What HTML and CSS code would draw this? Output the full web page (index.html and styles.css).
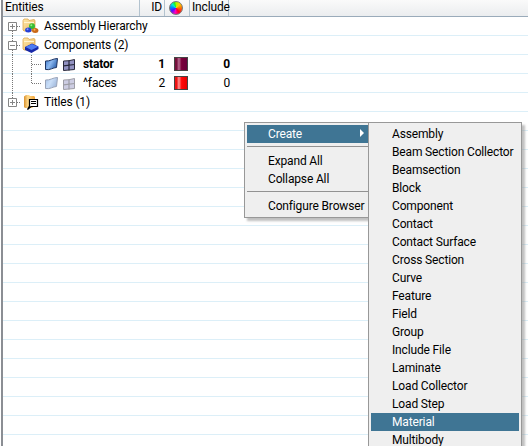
FILE: index.html
```html
<!DOCTYPE html>
<html lang="en">
<head>
<meta charset="utf-8">
<title>Entities</title>
<link rel="stylesheet" href="styles.css">
</head>
<body>
<svg class="defs" width="0" height="0">
  <defs>
    <linearGradient id="fold" x1="0" y1="0" x2="1" y2="1"><stop offset="0" stop-color="#ffe9ad"/><stop offset="1" stop-color="#e8b65c"/></linearGradient>
    <linearGradient id="orange" x1="0" x2="1"><stop offset="0" stop-color="#d9912e"/><stop offset=".35" stop-color="#ffd98a"/><stop offset="1" stop-color="#f0a63c"/></linearGradient>
    <linearGradient id="sheet" x1="0" x2="1" y2=".5"><stop offset="0" stop-color="#3c78cc"/><stop offset=".5" stop-color="#8db9f0"/><stop offset="1" stop-color="#3468b4"/></linearGradient>
    <symbol id="folder" viewBox="0 0 17 17"><path d="M1 2.5 2 1h4l1 1.5 5-1 1 .8V12l-3 1H2L1 12z" fill="url(#fold)" stroke="#dda850" stroke-width=".8"/><path d="M2 4.5h10" stroke="#fff3cf"/></symbol>
    <symbol id="surface" viewBox="0 0 15 15"><path d="M1.5 4C6 4.500 9 1.500 13.500 1.500L12.500 10.500C9 10.500 6 13.500 1.500 12.500z" fill="url(#sheet)" stroke="#1e3462"/></symbol>
    <symbol id="mesh" viewBox="0 0 14 14"><path d="M1.500 3Q7 3.200 12.500 1.500V11.500Q7 12 1.500 12.500z" fill="#9292c2" stroke="#29293c"/><path d="M7 2.500v10M1.500 7.800 12.500 6.500" stroke="#29293c" fill="none" stroke-width="1.200"/></symbol>
  </defs>
</svg>
<div class="tree">
  <div class="head"><div class="c-name">Entities</div><div class="c-id">ID</div><div class="c-color"><i class="wheel"></i></div><div class="c-inc">Include</div><div class="c-rest"></div></div>
  <div class="row">
    <svg class="lines" width="18" height="19"><path d="M9.500 14v5M14 9.500h4" class="dot"/><path d="M5.500 5.500h8v8h-8zM7 9.500h5M9.500 7v5" class="box"/></svg>
    <svg class="ico" width="17" height="17"><use href="#folder"/><circle cx="10" cy="8.300" r="3" fill="#35bd35"/><circle cx="9.300" cy="7.300" r="1" fill="#96ee80"/><ellipse cx="6.300" cy="12" rx="3.200" ry="2.500" fill="#243fd8"/><ellipse cx="13.200" cy="12.500" rx="3.200" ry="2.500" fill="#c96818"/><circle cx="12.500" cy="11.700" r="1" fill="#f6b553"/><circle cx="5.500" cy="11.300" r="1" fill="#7b9cff"/></svg>
    <span class="label"><span class="w94">Assembly Hierarchy</span></span>
  </div>
  <div class="row">
    <svg class="lines" width="18" height="19"><path d="M9.500 0v5M9.500 14v5M14 9.500h4" class="dot"/><path d="M5.500 5.500h8v8h-8zM7 9.500h5" class="box"/></svg>
    <svg class="ico" width="17" height="17"><use href="#folder"/><path d="M3 10 10 6.500 16.500 9.500V12L9.500 16 3 13z" fill="#1728a8"/><path d="M3.500 10 10 7 16 9.700 9.500 13z" fill="#4e7cf2"/></svg>
    <span class="label">Components (2)</span>
  </div>
  <div class="row bold">
    <svg class="lines wide" width="41" height="19"><path d="M9.500 0v19M28.500 0v19M29 9.500h9" class="dot"/></svg>
    <svg class="surf" width="15" height="15"><use href="#surface"/></svg><svg class="mesh" width="14" height="14"><use href="#mesh"/></svg>
    <span class="label child">stator</span><span class="id">1</span><i class="swatch maroon"></i><span class="inc">0</span>
  </div>
  <div class="row faded">
    <svg class="lines wide" width="41" height="19"><path d="M9.500 0v19M28.500 0v10M29 9.500h9" class="dot"/></svg>
    <svg class="surf" width="15" height="15"><use href="#surface"/></svg><svg class="mesh" width="14" height="14"><use href="#mesh"/></svg>
    <span class="label child">^faces</span><span class="id">2</span><i class="swatch red"></i><span class="inc">0</span>
  </div>
  <div class="row">
    <svg class="lines" width="18" height="19"><path d="M9.500 0v5M14 9.500h4" class="dot"/><path d="M5.500 5.500h8v8h-8zM7 9.500h5M9.500 7v5" class="box"/></svg>
    <svg class="ico" width="17" height="17"><path d="M2 2.500 4 1h3l1 1h4l1 1v8l-3 3H3L2 13z" fill="url(#orange)"/><path d="M7.500 5.500h8v7H9L5.500 15.500 7.500 12z" fill="#fff" stroke="#000" stroke-width="1.200"/><path d="M9 7.500h5M9 9.500h5" stroke="#000"/></svg>
    <span class="label">Titles (1)</span>
  </div>
  <div class="blank"></div>
</div>
<div class="menu main">
  <div class="item on">Create<svg class="arrow" width="4" height="8"><path d="M0 0 4 4 0 8z" fill="#fff"/></svg></div>
  <hr><div class="item">Expand All</div><div class="item">Collapse All</div>
  <hr><div class="item cfg">Configure Browser</div>
</div>
<div class="menu sub">
  <div class="item">Assembly</div><div class="item">Beam Section Collector</div><div class="item">Beamsection</div><div class="item">Block</div><div class="item">Component</div><div class="item">Contact</div><div class="item">Contact Surface</div><div class="item">Cross Section</div><div class="item">Curve</div><div class="item">Feature</div><div class="item">Field</div><div class="item">Group</div><div class="item">Include File</div><div class="item">Laminate</div><div class="item">Load Collector</div><div class="item">Load Step</div><div class="item on">Material</div><div class="item">Multibody</div>
</div>
</body>
</html>
```
FILE: styles.css
```css
* { box-sizing: border-box; }
body { margin: 0; width: 528px; height: 446px; overflow: hidden; position: relative; background: #fff; color: #000; font: 12px/18px Roboto, "Liberation Sans", sans-serif; letter-spacing: -.15px; white-space: nowrap; }
.defs { position: absolute; }
.tree { margin-left: 1px; height: 446px; border-left: 2px solid #8b8e94; display: flex; flex-direction: column; }
.head { display: flex; height: 17px; flex: none; line-height: 14px; background: linear-gradient(#fafafa, #ebedef); border-bottom: 1px solid #9aabba; }
.head > div { border-right: 1px solid #b3c3cf; }
.c-name { width: 137px; padding-left: 2px; }
.c-id { width: 25px; text-align: right; padding-right: 2px; }
.c-color { width: 25px; padding: 1px 0 0 4px; }
.c-inc { width: 39px; padding-left: 2px; }
.head .c-rest { flex: 1; border: 0; }
.wheel { display: block; width: 14px; height: 14px; border-radius: 50%; border: 1px solid #777; background: conic-gradient(#9cff00, #ffd000 45deg, #ff7000 90deg, #ff0020 145deg, #ff00c0 190deg, #5010ff 235deg, #0080ff 275deg, #00efd0 315deg, #20ef20 345deg, #9cff00); }
.row { height: 19px; flex: none; display: flex; align-items: flex-start; border-bottom: 1px solid #dceff8; }
.lines { flex: none; width: 18px; }
.lines.wide { width: 41px; }
.dot { fill: none; stroke: #777; stroke-dasharray: 1 1; }
.box { fill: none; stroke: #858585; }
.ico { flex: none; margin: 1px 0 0 1px; }
.label { margin-left: 5px; }
.surf { flex: none; margin-top: 2px; }
.mesh { flex: none; margin: 3px 0 0 3px; }
.child { width: 60px; margin-left: 7px; }
.id { width: 25px; text-align: right; margin-left: -3px; }
.swatch { width: 14px; height: 14px; margin: 2px 0 0 9px; border: 1px solid #444; flex: none; }
.maroon { background: linear-gradient(90deg, #76103c 15%, #b86c91 32%, #790039 55%, #69003b); }
.red { background: linear-gradient(90deg, #ed1212 15%, #ff9494 32%, #ff0808 55%, #e60000); }
.inc { width: 42px; text-align: right; }
.bold { font-weight: 700; }
.faded svg:not(.lines) { opacity: .45; }
.blank { flex: 1; background: repeating-linear-gradient(#fff 0 18px, #dceff8 18px 19px); }
.menu { position: absolute; top: 122px; background: #efefef; border: 1px solid #989898; padding: 2px; box-shadow: 3px 3px 2px #8888; }
.main { left: 244px; width: 130px; height: 96px; }
.sub { left: 368px; width: 154px; height: 340px; }
.item { height: 18px; padding-left: 21px; position: relative; }
.on { background: #3f7594; color: #fff; }
.arrow { position: absolute; left: 113px; top: 4px; }
.menu hr { border: 0; border-top: 1px solid #929292; margin: 3px 0 5px; }
```
